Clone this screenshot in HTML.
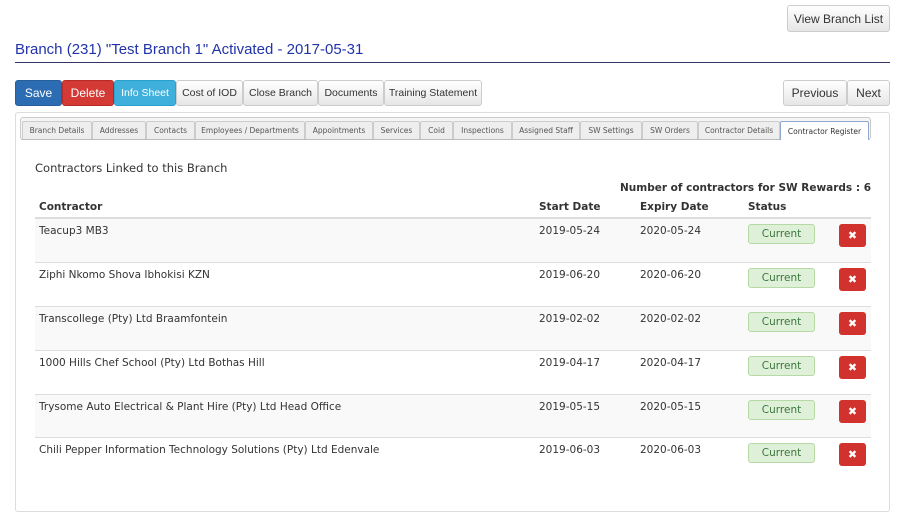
<!DOCTYPE html><html><head><style>
*{box-sizing:border-box;margin:0;padding:0}
body{width:900px;height:524px;background:#fff;font-family:"Liberation Sans",Arial,sans-serif;position:relative;overflow:hidden;color:#333}
.a{position:absolute}
.btn{position:absolute;height:26px;border:1px solid #ccc;border-radius:3px;background:linear-gradient(#fff,#e6e6e6);font-size:10.5px;color:#333;display:flex;align-items:center;justify-content:center}
.tab{position:absolute;top:121px;height:18px;border:1px solid #ccc;border-bottom:none;background:#eee;font-family:"DejaVu Sans",sans-serif;font-size:7.5px;color:#555;display:flex;align-items:center;justify-content:center;border-radius:2px 2px 0 0}
.v{font-family:"DejaVu Sans",Verdana,sans-serif;font-size:10.5px;color:#333}
.row{position:absolute;left:35px;width:836px;height:44px;border-top:1px solid #ddd}
.row span{position:absolute;top:6px}
.cur{position:absolute;left:713px;top:5px;width:67px;height:20px;background:#dff0d8;border:1px solid #b6d9a6;border-radius:3px;color:#3c763d;display:flex;align-items:center;justify-content:center}
.x{position:absolute;left:804px;top:5px;width:27px;height:23px;background:#d2322d;border-radius:3px;color:#fff;font-weight:bold;font-size:11px;display:flex;align-items:center;justify-content:center}
</style></head><body>
<div class="btn" style="left:787px;top:5px;width:103px;height:27px;font-size:12px">View Branch List</div>
<div class="a" style="left:15px;top:41px;font-size:15px;color:#2233aa">Branch (231) "Test Branch 1" Activated - 2017-05-31</div>
<div class="a" style="left:15px;top:62px;width:875px;height:1px;background:#333366"></div>
<div class="btn" style="left:15px;top:80px;width:47px;background:#2c6cb3;border-color:#285e9c;color:#fff;font-size:12px">Save</div>
<div class="btn" style="left:62px;top:80px;width:52px;background:#d43a35;border-color:#b52b27;color:#fff;font-size:12px">Delete</div>
<div class="btn" style="left:114px;top:80px;width:62px;background:#3fb0db;border-color:#2aa0cc;color:#fff">Info Sheet</div>
<div class="btn" style="left:176px;top:80px;width:67px">Cost of IOD</div>
<div class="btn" style="left:243px;top:80px;width:75px">Close Branch</div>
<div class="btn" style="left:318px;top:80px;width:66px">Documents</div>
<div class="btn" style="left:384px;top:80px;width:98px">Training Statement</div>
<div class="btn" style="left:783px;top:80px;width:64px;font-size:12px">Previous</div>
<div class="btn" style="left:847px;top:80px;width:43px;font-size:12px">Next</div>
<div class="a" style="left:15px;top:112px;width:875px;height:400px;border:1px solid #ddd;border-radius:3px"></div>
<div class="a" style="left:20px;top:117px;width:851px;height:23px;border:1px solid #ccc;border-bottom:1px solid #bbb;background:#f5f5f5;border-radius:3px"></div>
<div class="tab" style="left:22px;width:70px">Branch Details</div>
<div class="tab" style="left:92px;width:54px">Addresses</div>
<div class="tab" style="left:146px;width:49px">Contacts</div>
<div class="tab" style="left:195px;width:110px">Employees / Departments</div>
<div class="tab" style="left:305px;width:68px">Appointments</div>
<div class="tab" style="left:373px;width:47px">Services</div>
<div class="tab" style="left:420px;width:33px">Coid</div>
<div class="tab" style="left:453px;width:59px">Inspections</div>
<div class="tab" style="left:512px;width:68px">Assigned Staff</div>
<div class="tab" style="left:580px;width:62px">SW Settings</div>
<div class="tab" style="left:642px;width:56px">SW Orders</div>
<div class="tab" style="left:698px;width:82px">Contractor Details</div>
<div class="tab" style="left:780px;width:89px;background:#fff;border-color:#8fa8d0;color:#333;height:19px">Contractor Register</div>
<div class="a v" style="left:35px;top:161px;font-size:11.5px">Contractors Linked to this Branch</div>
<div class="a v" style="left:500px;width:371px;top:182px;text-align:right;font-weight:bold">Number of contractors for SW Rewards : 6</div>
<div class="a v" style="left:39px;top:201px;font-weight:bold">Contractor</div>
<div class="a v" style="left:539px;top:201px;font-weight:bold">Start Date</div>
<div class="a v" style="left:640px;top:201px;font-weight:bold">Expiry Date</div>
<div class="a v" style="left:748px;top:201px;font-weight:bold">Status</div>
<div class="a" style="left:35px;top:217px;width:836px;height:2px;background:#ddd"></div>
<div class="row v" style="top:219px;background:#f9f9f9;border-top:none"><span style="left:4px">Teacup3 MB3</span><span style="left:504px">2019-05-24</span><span style="left:605px">2020-05-24</span><div class="cur">Current</div><div class="x">✖</div></div>
<div class="row v" style="top:262px"><span style="left:4px">Ziphi Nkomo Shova Ibhokisi KZN</span><span style="left:504px">2019-06-20</span><span style="left:605px">2020-06-20</span><div class="cur">Current</div><div class="x">✖</div></div>
<div class="row v" style="top:306px;background:#f9f9f9"><span style="left:4px">Transcollege (Pty) Ltd Braamfontein</span><span style="left:504px">2019-02-02</span><span style="left:605px">2020-02-02</span><div class="cur">Current</div><div class="x">✖</div></div>
<div class="row v" style="top:350px"><span style="left:4px">1000 Hills Chef School (Pty) Ltd Bothas Hill</span><span style="left:504px">2019-04-17</span><span style="left:605px">2020-04-17</span><div class="cur">Current</div><div class="x">✖</div></div>
<div class="row v" style="top:394px;background:#f9f9f9"><span style="left:4px">Trysome Auto Electrical &amp; Plant Hire (Pty) Ltd Head Office</span><span style="left:504px">2019-05-15</span><span style="left:605px">2020-05-15</span><div class="cur">Current</div><div class="x">✖</div></div>
<div class="row v" style="top:437px"><span style="left:4px">Chili Pepper Information Technology Solutions (Pty) Ltd Edenvale</span><span style="left:504px">2019-06-03</span><span style="left:605px">2020-06-03</span><div class="cur">Current</div><div class="x">✖</div></div>
</body></html>
